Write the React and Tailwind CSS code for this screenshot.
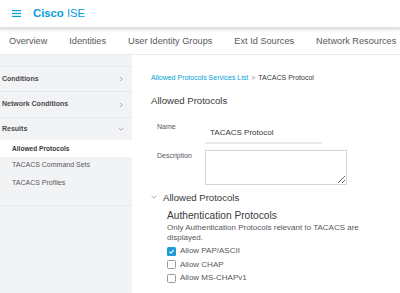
import React from 'react';

const tabs = ['Overview', 'Identities', 'User Identity Groups', 'Ext Id Sources', 'Network Resources'];

const Chevron = ({ down }) => (
    <svg width="6" height="6" viewBox="0 0 10 10" className="text-[#8a8a8d]">
        {down ? (
            <path d="M1 3 L5 7 L9 3" fill="none" stroke="currentColor" strokeWidth="1.2" />
        ) : (
            <path d="M3 1 L7 5 L3 9" fill="none" stroke="currentColor" strokeWidth="1.2" />
        )}
    </svg>
);

const Checkbox = ({ checked, label }) => (
    <label className="flex items-center gap-[4px] h-[13.5px]">
        {checked ? (
            <span className="w-[9px] h-[9px] rounded-[1.5px] bg-[#1e9ad6] flex items-center justify-center">
                <svg width="7" height="7" viewBox="0 0 10 10">
                    <path d="M2 5.2 L4.2 7.4 L8.2 2.6" fill="none" stroke="white" strokeWidth="1.6" />
                </svg>
            </span>
        ) : (
            <span className="w-[9px] h-[9px] rounded-[1.5px] border border-[#9a9a9d] bg-white"></span>
        )}
        <span className="text-[8px] text-[#58585b]">{label}</span>
    </label>
);

const App = () => {
    return (
        <div className="w-[400px] h-[293px] overflow-hidden bg-white font-['Liberation_Sans',Arial,sans-serif] text-[#39393b]">
            {/* Header */}
            <div className="h-[29px] flex items-center pl-[12px] gap-[12px] border-b-2 border-[#e3e3e5] shadow-sm">
                <svg width="9" height="7" viewBox="0 0 9 7">
                    <rect x="0" y="0" width="9" height="1.2" fill="#049fd9" />
                    <rect x="0" y="2.9" width="9" height="1.2" fill="#049fd9" />
                    <rect x="0" y="5.8" width="9" height="1.2" fill="#049fd9" />
                </svg>
                <span className="text-[11.3px] text-[#049fd9] leading-none">
                    <span className="font-bold">Cisco</span> ISE
                </span>
            </div>

            {/* Tabs */}
            <div className="h-[26px] flex items-center pl-[9px] gap-[22px] border-b border-[#ececee] whitespace-nowrap">
                {tabs.map((t) => (
                    <span key={t} className="text-[9.2px] text-[#58585b]">{t}</span>
                ))}
            </div>

            <div className="flex h-full">
                {/* Sidebar */}
                <div className="w-[132px] shrink-0 bg-[#f2f3f5] pt-[11px]">
                    <div className="h-[26px] flex items-center justify-between pl-[2px] pr-[8px] border-t border-b border-[#e8e9eb]">
                        <span className="text-[7px] font-bold text-[#4a4a4d]">Conditions</span>
                        <Chevron />
                    </div>
                    <div className="h-[26px] flex items-center justify-between pl-[2px] pr-[8px] border-b border-[#e8e9eb]">
                        <span className="text-[7px] font-bold text-[#4a4a4d]">Network Conditions</span>
                        <Chevron />
                    </div>
                    <div className="h-[22px] flex items-center justify-between pl-[2px] pr-[8px]">
                        <span className="text-[7px] font-bold text-[#4a4a4d]">Results</span>
                        <Chevron down />
                    </div>
                    <div className="pb-[13px] border-b border-[#e8e9eb]">
                        <div className="h-[17px] flex items-center pl-[12px] bg-white">
                            <span className="text-[6.6px] font-bold text-[#39393b]">Allowed Protocols</span>
                        </div>
                        <div className="h-[17px] flex items-center pl-[12px]">
                            <span className="text-[7px] text-[#58585b]">TACACS Command Sets</span>
                        </div>
                        <div className="h-[18px] flex items-center pl-[12px]">
                            <span className="text-[7px] text-[#58585b]">TACACS Profiles</span>
                        </div>
                    </div>
                </div>

                {/* Main */}
                <div className="flex-1 pl-[19px] pt-[19px]">
                    <div className="text-[7px] flex items-center gap-[3px] leading-none">
                        <span className="text-[#049fd9]">Allowed Protocols Services List</span>
                        <span className="text-[#8a8a8d]">&gt;</span>
                        <span className="text-[#39393b]">TACACS Protocol</span>
                    </div>
                    <h1 className="text-[9.6px] mt-[15px] leading-none">Allowed Protocols</h1>

                    <div className="mt-[17px] pl-[6px] flex">
                        <span className="w-[48px] text-[7px] text-[#58585b] leading-none">Name</span>
                        <div className="w-[117px] border-b-2 border-[#e8e8ea] pl-[5px] pt-[6px] pb-[5px] text-[8px] leading-none">
                            TACACS Protocol
                        </div>
                    </div>

                    <div className="mt-[6px] pl-[6px] flex">
                        <span className="w-[48px] text-[7px] text-[#58585b] leading-none pt-[2px]">Description</span>
                        <textarea className="w-[142px] h-[35px] border border-[#d4d4d6] bg-white outline-none"></textarea>
                    </div>

                    <div className="mt-[8px] flex items-center gap-[6px]">
                        <Chevron down />
                        <span className="text-[9.6px] leading-none">Allowed Protocols</span>
                    </div>

                    <div className="pl-[16px] mt-[9px]">
                        <div className="text-[10.2px] leading-none">Authentication Protocols</div>
                        <p className="w-[212px] text-[8px] leading-[10px] text-[#58585b] mt-[2px]">
                            Only Authentication Protocols relevant to TACACS are displayed.
                        </p>
                        <div className="mt-[1px]">
                            <Checkbox checked label="Allow PAP/ASCII" />
                            <Checkbox label="Allow CHAP" />
                            <Checkbox label="Allow MS-CHAPv1" />
                        </div>
                    </div>
                </div>
            </div>
        </div>
    );
};

export default App;
